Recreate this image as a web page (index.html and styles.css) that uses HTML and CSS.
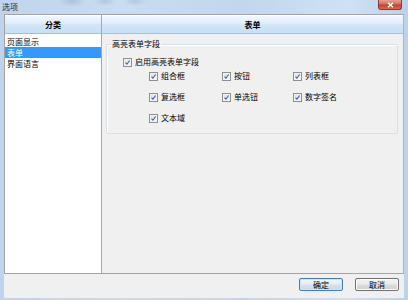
FILE: index.html
```html
<!DOCTYPE html>
<html lang="zh-CN">
<head>
<meta charset="utf-8">
<title>选项</title>
<link rel="stylesheet" href="styles.css">
</head>
<body>
<div class="window">
  <div class="titlebar">
    <span class="title">选项</span>
    <button class="close" aria-label="关闭">
      <svg width="7" height="6" viewBox="0 0 7 6"><path d="M1 0.8 L6 5.2 M6 0.8 L1 5.2" stroke="#fff" stroke-width="1.4"/></svg>
    </button>
  </div>
  <div class="client">
    <div class="panes">
      <div class="pane left">
        <div class="header">分类</div>
        <ul class="list">
          <li>页面显示</li>
          <li class="selected">表单</li>
          <li>界面语言</li>
        </ul>
      </div>
      <div class="pane right">
        <div class="header">表单</div>
        <fieldset class="group">
          <legend>高亮表单字段</legend>
          <label class="check main"><span class="box"><svg viewBox="0 0 7 7"><path d="M1.5 3.7 L2.9 5.2 L5.6 1.5" fill="none" stroke="#3a5fb8" stroke-width="1.1"/></svg></span>启用高亮表单字段</label>
          <div class="options">
            <label class="check"><span class="box"><svg viewBox="0 0 7 7"><path d="M1.5 3.7 L2.9 5.2 L5.6 1.5" fill="none" stroke="#3a5fb8" stroke-width="1.1"/></svg></span>组合框</label>
            <label class="check"><span class="box"><svg viewBox="0 0 7 7"><path d="M1.5 3.7 L2.9 5.2 L5.6 1.5" fill="none" stroke="#3a5fb8" stroke-width="1.1"/></svg></span>按钮</label>
            <label class="check"><span class="box"><svg viewBox="0 0 7 7"><path d="M1.5 3.7 L2.9 5.2 L5.6 1.5" fill="none" stroke="#3a5fb8" stroke-width="1.1"/></svg></span>列表框</label>
            <label class="check"><span class="box"><svg viewBox="0 0 7 7"><path d="M1.5 3.7 L2.9 5.2 L5.6 1.5" fill="none" stroke="#3a5fb8" stroke-width="1.1"/></svg></span>复选框</label>
            <label class="check"><span class="box"><svg viewBox="0 0 7 7"><path d="M1.5 3.7 L2.9 5.2 L5.6 1.5" fill="none" stroke="#3a5fb8" stroke-width="1.1"/></svg></span>单选钮</label>
            <label class="check"><span class="box"><svg viewBox="0 0 7 7"><path d="M1.5 3.7 L2.9 5.2 L5.6 1.5" fill="none" stroke="#3a5fb8" stroke-width="1.1"/></svg></span>数字签名</label>
            <label class="check"><span class="box"><svg viewBox="0 0 7 7"><path d="M1.5 3.7 L2.9 5.2 L5.6 1.5" fill="none" stroke="#3a5fb8" stroke-width="1.1"/></svg></span>文本域</label>
          </div>
        </fieldset>
      </div>
    </div>
    <div class="footer">
      <button class="btn default">确定</button>
      <button class="btn">取消</button>
    </div>
  </div>
</div>
</body>
</html>
```
FILE: styles.css
```css
* { box-sizing: border-box; }
html, body { margin: 0; padding: 0; }
body {
  width: 408px;
  height: 300px;
  overflow: hidden;
  font-family: "Noto Sans CJK SC", "Noto Sans", sans-serif;
  font-size: 8px;
  color: #000;
}
.window {
  width: 408px;
  height: 300px;
  display: flex;
  flex-direction: column;
  background: linear-gradient(to right, #bfd4ec 0%, #cadcf1 30%, #c2d6ed 60%, #d0e1f3 85%, #bcd1ea 100%);
  padding: 0 4px 2px 4px;
}
.titlebar {
  height: 14px;
  flex: none;
  display: flex;
  align-items: flex-start;
  justify-content: space-between;
  margin: 0 -4px;
  padding: 0 6px 0 2px;
  background:
    radial-gradient(ellipse 14px 6px at 72px 1px, rgba(120,140,170,0.3), transparent),
    radial-gradient(ellipse 12px 5px at 105px 1px, rgba(120,140,170,0.25), transparent),
    radial-gradient(ellipse 12px 5px at 135px 1px, rgba(120,140,170,0.25), transparent);
}
.title {
  line-height: 13px;
  color: #1e2b3c;
}
.close {
  width: 24px;
  height: 10px;
  margin: 0;
  padding: 0;
  border: 1px solid #8a3a32;
  border-top: none;
  border-radius: 0 0 3px 3px;
  background: linear-gradient(#e0a294 0%, #d0705e 45%, #c2412c 55%, #d86a52 100%);
  display: flex;
  align-items: center;
  justify-content: center;
}
.close svg { display: block; }
.client {
  flex: 1;
  display: flex;
  flex-direction: column;
  background: #f0f0f0;
}
.panes {
  height: 260px;
  flex: none;
  display: grid;
  grid-template-columns: 97px 1fr;
  border: 1px solid #a3a3a3;
  border-right-color: #b4b4b4;
}
.pane { display: flex; flex-direction: column; min-width: 0; }
.pane.left { background: #fff; border-right: 1px solid #a8a8a8; }
.pane.right { background: #f0f0f0; }
.header {
  height: 19px;
  flex: none;
  display: flex;
  align-items: center;
  justify-content: center;
  font-weight: bold;
  background: linear-gradient(#f3f9fe 0%, #e0eefa 45%, #cfe5f7 55%, #c6e0f5 100%);
  border-bottom: 1px solid #a6bfd6;
  box-shadow: inset 0 1px 0 #fff;
}
.list {
  list-style: none;
  margin: 0;
  padding: 2px 0 0 0;
}
.list li {
  height: 11px;
  line-height: 11px;
  padding-left: 2px;
  white-space: nowrap;
}
.list li.selected { background: #3399ff; color: #fff; }
.group {
  margin: 5px 5px 0 4px;
  padding: 0 0 10px 0;
  border: 1px solid #d5dfe5;
  border-radius: 2px;
  box-shadow: inset 1px 1px 0 #fff;
  min-width: 0;
}
.group legend {
  margin-left: 4px;
  padding: 0 1px;
  line-height: 10px;
  height: 10px;
}
.check {
  display: flex;
  align-items: center;
  gap: 3px;
  height: 10px;
  line-height: 10px;
  white-space: nowrap;
}
.check.main { margin: 8px 0 0 16px; }
.box {
  width: 9px;
  height: 9px;
  flex: none;
  border: 1px solid #8f8f8f;
  background: linear-gradient(135deg, #dcdcdc, #fbfbfb);
  box-shadow: inset 0 0 0 1px #f4f4f4;
  display: flex;
  align-items: center;
  justify-content: center;
}
.box svg { width: 7px; height: 7px; display: block; }
.options {
  display: grid;
  grid-template-columns: 73px 71px 1fr;
  row-gap: 11px;
  margin: 4px 0 0 42px;
}
.footer {
  flex: 1;
  display: flex;
  justify-content: flex-end;
  align-items: flex-start;
  gap: 12px;
  padding: 4px 5px 0 0;
}
.btn {
  width: 44px;
  height: 13px;
  margin: 0;
  padding: 0;
  font: inherit;
  font-size: 8px;
  line-height: 11px;
  color: #000;
  border: 1px solid #707070;
  border-radius: 2px;
  background: linear-gradient(#f2f2f2 0%, #ebebeb 48%, #dddddd 52%, #cfcfcf 100%);
  box-shadow: inset 0 0 0 1px #fcfcfc;
}
.btn.default {
  border-color: #3c7fb1;
  background: linear-gradient(#f0f5f9 0%, #e6edf3 48%, #d6e2ec 52%, #cad8e5 100%);
  box-shadow: inset 0 0 0 1px #cfe6f6;
}
```
